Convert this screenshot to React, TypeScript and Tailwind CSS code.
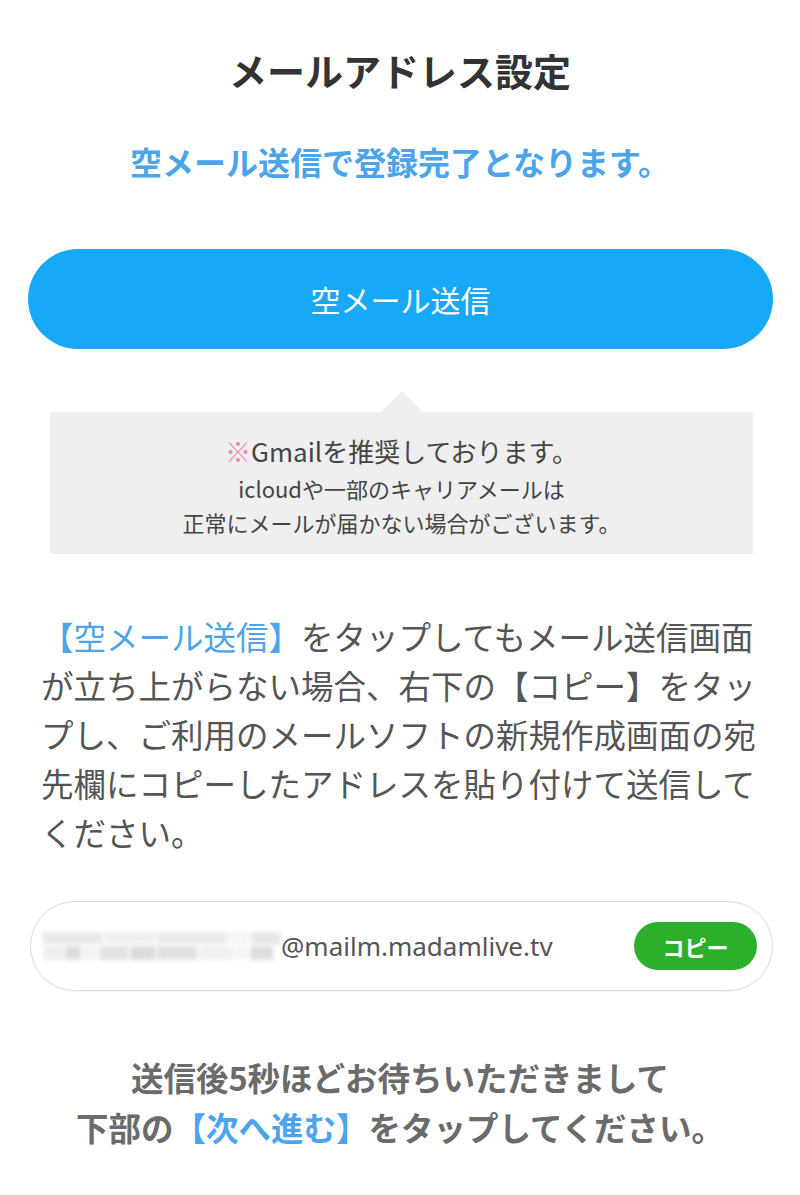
import React from 'react';

const jp = { fontFamily: '"Noto Sans CJK JP", "Noto Sans", sans-serif' };

function BlurredAddress() {
  // pixelated/blurred local part of the address
  return (
    <div className="flex w-[240px] flex-col gap-[2px] blur-[2px] opacity-80">
      <div className="flex h-[12px] gap-[2px]">
        <div className="w-[60px] bg-[#e4e4e4]" />
        <div className="w-[50px] bg-[#ececec]" />
        <div className="w-[70px] bg-[#e6e6e6]" />
        <div className="w-[20px] bg-[#f2f2f2]" />
        <div className="w-[30px] bg-[#e2e2e2]" />
      </div>
      <div className="flex h-[14px] gap-[2px]">
        <div className="w-[20px] bg-[#eaeaea]" />
        <div className="w-[16px] bg-[#d8d8d8]" />
        <div className="w-[14px] bg-[#f0f0f0]" />
        <div className="w-[30px] bg-[#dedede]" />
        <div className="w-[24px] bg-[#d2d2d2]" />
        <div className="w-[40px] bg-[#dcdcdc]" />
        <div className="w-[34px] bg-[#eeeeee]" />
        <div className="w-[14px] bg-[#f4f4f4]" />
        <div className="w-[22px] bg-[#d6d6d6]" />
      </div>
    </div>
  );
}

export default function App() {
  return (
    <div className="min-h-[1195px] w-full bg-white" style={jp}>
      <h1 className="pt-[48px] text-center text-[38px] font-bold leading-[43px] text-[#333333]">
        メールアドレス設定
      </h1>

      <p className="mt-[52px] text-center text-[32px] font-bold leading-[36px] text-[#4ca5ea]">
        空メール送信で登録完了となります。
      </p>

      <div className="ml-[28px] mr-[27px] mt-[70px]">
        <button className="flex h-[100px] w-full items-center justify-center rounded-full bg-[#18a8f8] text-[30px] text-white">
          空メール送信
        </button>
      </div>

      <div className="ml-[50px] mr-[47px] mt-[42px] flex flex-col items-center">
        <div className="h-0 w-0 border-x-[21px] border-b-[21px] border-x-transparent border-b-[#efefef]" />
        <div className="w-full bg-[#efefef] pb-[15px] pt-[23px] text-center text-[#444444]">
          <p className="text-[26px] leading-[32px]">
            <span className="text-[#ee88bb]">※</span>Gmailを推奨しております。
          </p>
          <p className="mt-[4px] text-[22px] leading-[34px]">
            icloudや一部のキャリアメールは
            <br />
            正常にメールが届かない場合がございます。
          </p>
        </div>
      </div>

      <p className="ml-[41px] mr-[30px] mt-[57px] text-[32.5px] leading-[49px] text-[#555555]">
        <span className="text-[#4ca5ea]">【空メール送信】</span>をタップしてもメール送信画面
        <br />
        が立ち上がらない場合、右下の【コピー】をタッ
        <br />
        プし、ご利用のメールソフトの新規作成画面の宛
        <br />
        先欄にコピーしたアドレスを貼り付けて送信して
        <br />
        ください。
      </p>

      <div className="ml-[30px] mr-[27px] mt-[45px] flex h-[90px] items-center rounded-full border border-[#dddddd] pl-[12px] pr-[15px] shadow-[0_1px_2px_rgba(0,0,0,0.06)]">
        <BlurredAddress />
        <span className="ml-[-2px] text-[26px] text-[#555555]" style={{ fontFamily: '"Noto Sans", "Noto Sans CJK JP", sans-serif' }}>
          @mailm.madamlive.tv
        </span>
        <button className="ml-auto flex h-[48px] w-[123px] items-center justify-center rounded-full bg-[#2cb02c] text-[22px] font-bold text-white">
          コピー
        </button>
      </div>

      <div className="mt-[61px] pb-[40px] text-center text-[32.5px] font-bold leading-[50px] text-[#6b6b6b]">
        <p>送信後5秒ほどお待ちいただきまして</p>
        <p>
          下部の<span className="text-[#4ca5ea]">【次へ進む】</span>をタップしてください。
        </p>
      </div>
    </div>
  );
}
